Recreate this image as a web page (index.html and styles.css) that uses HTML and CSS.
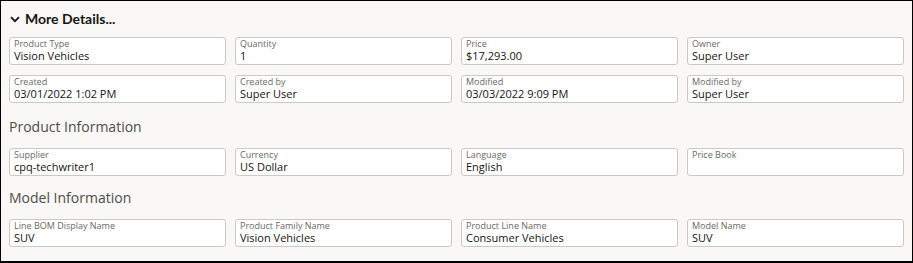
FILE: index.html
```html
<!DOCTYPE html>
<html>
<head>
<meta charset="utf-8">
<link rel="stylesheet" href="styles.css">
</head>
<body>
<div class="panel">
  <div class="panel-header">
    <svg class="chevron" width="10" height="7" viewBox="0 0 10 7"><path d="M1 1.2 L5 5.2 L9 1.2" fill="none" stroke="#161513" stroke-width="1.8"/></svg>
    <span class="panel-title">More Details...</span>
  </div>
  <div class="grid">
    <div class="field"><div class="label">Product Type</div><div class="value">Vision Vehicles</div></div>
    <div class="field"><div class="label">Quantity</div><div class="value">1</div></div>
    <div class="field"><div class="label">Price</div><div class="value">$17,293.00</div></div>
    <div class="field"><div class="label">Owner</div><div class="value">Super User</div></div>
    <div class="field"><div class="label">Created</div><div class="value">03/01/2022 1:02 PM</div></div>
    <div class="field"><div class="label">Created by</div><div class="value">Super User</div></div>
    <div class="field"><div class="label">Modified</div><div class="value">03/03/2022 9:09 PM</div></div>
    <div class="field"><div class="label">Modified by</div><div class="value">Super User</div></div>
  </div>
  <h2 class="section-title first">Product Information</h2>
  <div class="grid">
    <div class="field"><div class="label">Supplier</div><div class="value">cpq-techwriter1</div></div>
    <div class="field"><div class="label">Currency</div><div class="value">US Dollar</div></div>
    <div class="field"><div class="label">Language</div><div class="value">English</div></div>
    <div class="field"><div class="label">Price Book</div><div class="value"></div></div>
  </div>
  <h2 class="section-title">Model Information</h2>
  <div class="grid">
    <div class="field"><div class="label">Line BOM Display Name</div><div class="value">SUV</div></div>
    <div class="field"><div class="label">Product Family Name</div><div class="value">Vision Vehicles</div></div>
    <div class="field"><div class="label">Product Line Name</div><div class="value">Consumer Vehicles</div></div>
    <div class="field"><div class="label">Model Name</div><div class="value">SUV</div></div>
  </div>
</div>
</body>
</html>
```

FILE: styles.css
```css
html, body {
  margin: 0;
  padding: 0;
}
body {
  font-family: "Open Sans", "Noto Sans", sans-serif;
  color: #161513;
}
.panel {
  width: 913px;
  height: 263px;
  box-sizing: border-box;
  border: 1px solid #000;
  border-bottom-width: 2px;
  background: #f9f8f6;
  padding: 0 8px;
}
.panel-header {
  height: 35px;
  display: flex;
  align-items: center;
  gap: 5px;
  padding-left: 1px;
  padding-bottom: 1px;
}
.chevron {
  display: block;
  margin-top: 1px;
}
.panel-title {
  font-family: "Lato", sans-serif;
  font-weight: 700;
  font-size: 14px;
  color: #161513;
}
.grid {
  display: grid;
  grid-template-columns: repeat(4, 217px);
  column-gap: 9px;
  row-gap: 10px;
}
.field {
  height: 28px;
  box-sizing: border-box;
  background: #fff;
  border: 1px solid #cbc9c6;
  border-radius: 3px;
  padding: 1px 4px 0;
}
.label {
  font-size: 9px;
  line-height: 10px;
  color: #6b6966;
}
.value {
  font-size: 11px;
  line-height: 13px;
  color: #161513;
}
.section-title {
  margin: 12px 0 11px;
  font-size: 14px;
  line-height: 20px;
  font-weight: 400;
  color: #4f4c49;
}
.section-title.first {
  margin-top: 14px;
}
```
